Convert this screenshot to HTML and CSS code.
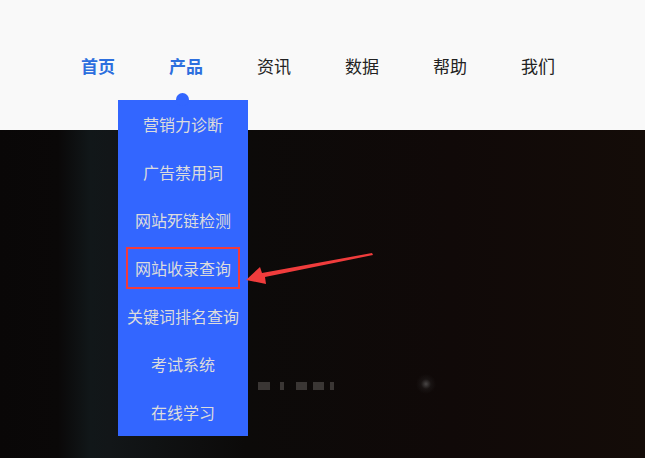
FILE: index.html
```html
<!DOCTYPE html>
<html lang="zh-CN">
<head>
  <meta charset="UTF-8" />
  <meta name="viewport" content="width=device-width, initial-scale=1" />
  <title>产品</title>
  <link rel="stylesheet" href="styles.css">
</head>
<body>

  <header class="top">
    <nav class="nav">
      <a href="#" class="nav-item on">首页</a>
      <div class="nav-drop">
        <a href="#" class="nav-item on">产品</a>
        <ul class="drop">
          <li><a href="#">营销力诊断</a></li>
          <li><a href="#">广告禁用词</a></li>
          <li><a href="#">网站死链检测</a></li>
          <li class="marked"><a href="#">网站收录查询</a></li>
          <li><a href="#">关键词排名查询</a></li>
          <li><a href="#">考试系统</a></li>
          <li><a href="#">在线学习</a></li>
        </ul>
        <!-- annotation arrow -->
        <svg class="arrow" width="140" height="40" viewBox="0 0 140 40">
          <polygon points="126,2 127,4 19,26 20,33 0,29 14,16 16,22" fill="#f03c3c" />
        </svg>
      </div>
      <a href="#" class="nav-item">资讯</a>
      <a href="#" class="nav-item">数据</a>
      <a href="#" class="nav-item">帮助</a>
      <a href="#" class="nav-item">我们</a>
    </nav>
  </header>

  <section class="hero">
    <div class="dots">
      <span class="dot w12"></span>
      <span class="dot w4"></span>
      <span class="dot w11"></span>
      <span class="dot w11"></span>
      <span class="dot w4"></span>
    </div>
  </section>

</body>
</html>
```

FILE: styles.css
```css
body {
  margin: 0;
  font-family: "Noto Sans CJK SC", "Noto Sans", sans-serif;
  background: #0b0908;
  overflow: hidden;
}
.top {
  height: 130px;
  background: #f9f9f9;
  position: relative;
  z-index: 2;
}
.nav {
  display: flex;
  padding: 48px 0 0 54px;
}
.nav-item {
  display: block;
  width: 88px;
  height: 36px;
  line-height: 36px;
  text-align: center;
  font-size: 17px;
  color: #222;
  text-decoration: none;
}
.nav-item.on {
  color: #2d6fde;
  font-weight: bold;
}
.nav-drop {
  position: relative;
}
.drop {
  position: absolute;
  top: 52px;
  left: -24px;
  width: 130px;
  margin: 0;
  padding: 0;
  list-style: none;
  background: #3366ff;
}
.drop::before {
  content: "";
  position: absolute;
  top: -7px;
  left: 58px;
  width: 13px;
  height: 13px;
  border-radius: 50%;
  background: #3366ff;
}
.drop li {
  height: 48px;
  display: flex;
  align-items: center;
  justify-content: center;
}
.drop a {
  color: #dcdcdc;
  font-size: 16px;
  text-decoration: none;
  white-space: nowrap;
}
.drop li.marked {
  height: 38px;
  margin: 3px 8px;
  border: 2px solid #f23b3b;
}
.arrow {
  position: absolute;
  top: 203px;
  left: 104px;
}
.hero {
  height: 328px;
  background:
    radial-gradient(circle at 426px 254px, rgba(120,120,120,0.55) 0, rgba(60,60,60,0.2) 5px, rgba(0,0,0,0) 10px),
    linear-gradient(to right, #090707 0%, #0a0808 9%, #111719 14%, #121618 17%, #0c0a09 38%, #100908 70%, #140c08 100%);
}
.dots {
  display: flex;
  gap: 6px;
  padding: 252px 0 0 258px;
}
.dot {
  display: block;
  height: 8px;
  background: #3a3634;
  filter: blur(0.6px);
}
.w12 { width: 12px; margin-right: 4px; }
.w4 { width: 4px; margin-right: 6px; }
.w11 { width: 11px; }
```
